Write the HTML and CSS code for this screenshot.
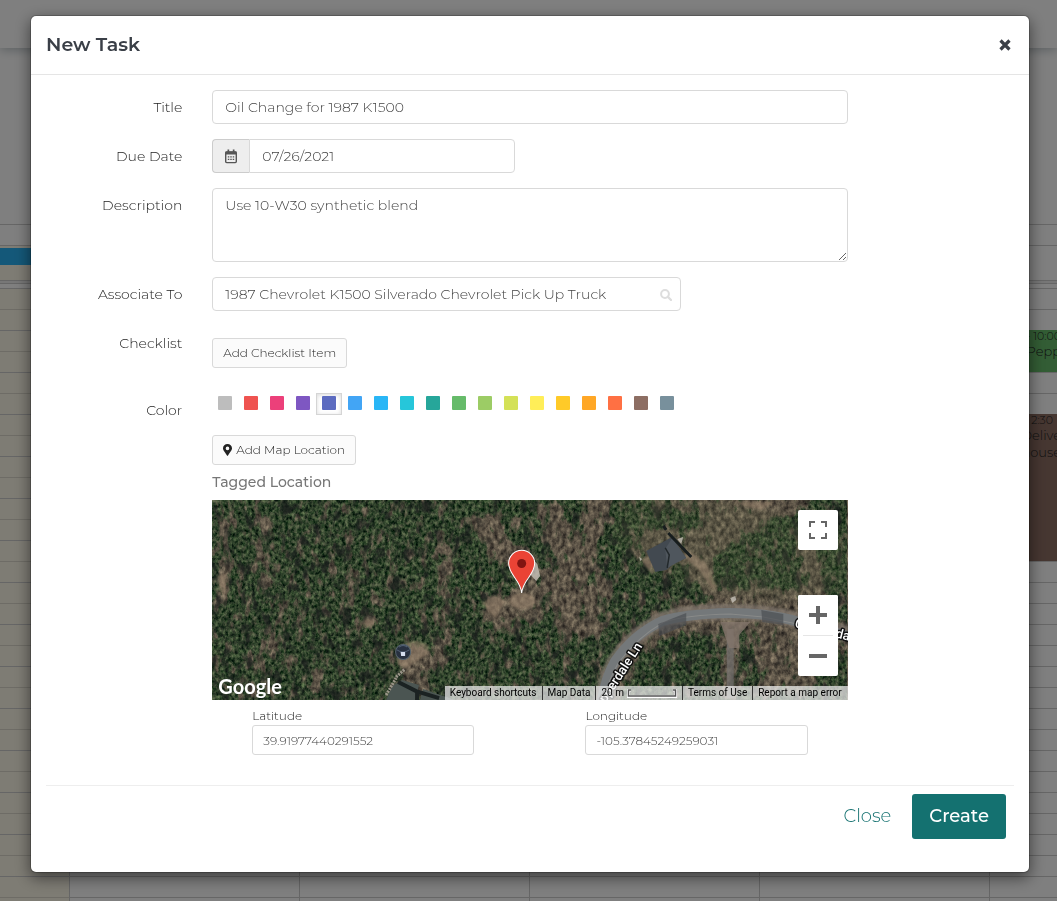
FILE: index.html
```html
<!DOCTYPE html>
<html lang="en">
<head>
<meta charset="utf-8">
<meta name="viewport" content="width=device-width, initial-scale=1">
<title>New Task</title>
<link rel="stylesheet" href="styles.css">
</head>
<body>
<div class="calendar" aria-hidden="true">
  <div class="topbar"></div>
  <div class="toolbar"></div>
  <div class="day-names"></div>
  <div class="all-day"><div class="all-day-side"><div class="all-day-event"></div></div></div>
  <div class="divider"></div>
  <div class="slots">
    <div class="day today"></div>
    <div class="day"></div>
    <div class="day"></div>
    <div class="day"></div>
    <div class="day"></div>
    <div class="day">
      <div class="event green"><div class="event-time">9:00 - 10:00</div><div>Call Pepp</div></div>
      <div class="event brown"><div class="event-time">12:30 - 2:30</div><div>1st Delive</div><div>to house</div></div>
    </div>
  </div>
</div>

<div class="backdrop">
<div class="modal" role="dialog" aria-labelledby="dialog-title">
  <header class="modal-header">
    <h1 class="modal-title" id="dialog-title">New Task</h1>
    <button class="dismiss" type="button" aria-label="Dismiss"><svg width="14" height="14" viewBox="0 0 14 14"><path d="M2.500 2.500L11.500 11.500M11.500 2.500L2.500 11.500" stroke="#3a3f47" stroke-width="3.200"/></svg></button>
  </header>
  <form class="modal-body">
    <div class="row">
      <label class="label" for="title">Title</label>
      <div class="field wide"><input class="control" id="title" type="text" value="Oil Change for 1987 K1500"></div>
    </div>
    <div class="row">
      <label class="label" for="due">Due Date</label>
      <div class="field narrow">
        <div class="group">
          <span class="addon"><svg width="14" height="15" viewBox="0 0 14 15"><rect x="1.700" y="3" width="10.600" height="10.600" rx="1" fill="none" stroke="#555" stroke-width="1.400"/><path d="M1.500 2.500h11v3h-11zM3.500 .5h1.700v3H3.500zM8.800 .5h1.700v3H8.800z" fill="#555"/><path d="M3.800 7.300h1.500v1.300H3.800zM6.250 7.300h1.500v1.300h-1.500zM8.700 7.300h1.500v1.300H8.700zM3.800 9.800h1.500v1.300H3.800zM6.250 9.800h1.500v1.300h-1.500zM8.700 9.800h1.500v1.300H8.700z" fill="#555"/></svg></span>
          <input class="control" id="due" type="text" value="07/26/2021">
        </div>
      </div>
    </div>
    <div class="row">
      <label class="label" for="description">Description</label>
      <div class="field wide"><textarea class="control area" id="description">Use 10-W30 synthetic blend</textarea></div>
    </div>
    <div class="row">
      <label class="label" for="associate">Associate To</label>
      <div class="field medium">
        <div class="search">
          <input class="control" id="associate" type="text" value="1987 Chevrolet K1500 Silverado Chevrolet Pick Up Truck">
          <svg class="search-icon" width="12" height="12" viewBox="0 0 12 12"><circle cx="5" cy="5" r="3.900" fill="none" stroke="#ddd" stroke-width="2"/><path d="M7.800 7.800L11 11" stroke="#ddd" stroke-width="2.300" stroke-linecap="round"/></svg>
        </div>
      </div>
    </div>
    <div class="row checklist-row">
      <span class="label">Checklist</span>
      <div class="field wide checklist"><button class="small-button" type="button">Add Checklist Item</button></div>
    </div>
    <div class="row">
      <span class="label">Color</span>
      <div class="field wide swatches" role="group" aria-label="Color">
        <button type="button" class="swatch gray" aria-label="Gray"></button>
        <button type="button" class="swatch red" aria-label="Red"></button>
        <button type="button" class="swatch pink" aria-label="Pink"></button>
        <button type="button" class="swatch purple" aria-label="Purple"></button>
        <button type="button" class="swatch indigo selected" aria-label="Indigo" aria-pressed="true"></button>
        <button type="button" class="swatch blue" aria-label="Blue"></button>
        <button type="button" class="swatch sky" aria-label="Light blue"></button>
        <button type="button" class="swatch cyan" aria-label="Cyan"></button>
        <button type="button" class="swatch teal" aria-label="Teal"></button>
        <button type="button" class="swatch leaf" aria-label="Green"></button>
        <button type="button" class="swatch light-green" aria-label="Light green"></button>
        <button type="button" class="swatch lime" aria-label="Lime"></button>
        <button type="button" class="swatch yellow" aria-label="Yellow"></button>
        <button type="button" class="swatch amber" aria-label="Amber"></button>
        <button type="button" class="swatch orange" aria-label="Orange"></button>
        <button type="button" class="swatch deep-orange" aria-label="Deep orange"></button>
        <button type="button" class="swatch earth" aria-label="Brown"></button>
        <button type="button" class="swatch slate" aria-label="Blue gray"></button>
      </div>
    </div>
    <div class="row">
      <div class="field wide offset">
        <button class="small-button" type="button"><svg width="9" height="12" viewBox="0 0 9 12"><path fill-rule="evenodd" d="M4.500 0C2 0 0 1.900 0 4.300 0 6.300 1.300 7.200 4 11.600a.6.6 0 0 0 1 0C7.700 7.200 9 6.300 9 4.300 9 1.900 7 0 4.500 0zm0 2.600a1.800 1.800 0 1 1 0 3.600 1.800 1.800 0 0 1 0-3.600z" fill="#222"/></svg>Add Map Location</button>
        <h2 class="map-title">Tagged Location</h2>
        <div class="map">
          <svg class="terrain" viewBox="0 0 635 200" preserveAspectRatio="xMidYMid slice">
            <defs>
              <filter id="soil" x="0" y="0" width="100%" height="100%" color-interpolation-filters="sRGB">
                <feTurbulence type="fractalNoise" baseFrequency=".22 .16" numOctaves="4" seed="8"/>
                <feColorMatrix values=".6 0 0 0 .06  .55 0 0 0 .05  .45 0 0 0 .05  0 0 0 0 1"/>
              </filter>
              <filter id="trees" x="0" y="0" width="100%" height="100%" color-interpolation-filters="sRGB">
                <feTurbulence type="fractalNoise" baseFrequency=".12 .065" numOctaves="5" seed="21" result="n"/>
                <feColorMatrix in="n" values="0 0 0 0 0 0 0 0 0 0 0 0 0 0 0 1 0 0 0 0" result="a"/>
                <feComposite in="SourceAlpha" in2="a" operator="arithmetic" k2=".48" k3="1" k4="-.35" result="d"/>
                <feComponentTransfer in="d" result="mask"><feFuncA type="linear" slope="5" intercept="-1.900"/></feComponentTransfer>
                <feTurbulence type="fractalNoise" baseFrequency=".3 .24" numOctaves="4" seed="5"/>
                <feColorMatrix values=".62 0 0 0 -.12  .58 .1 0 0 -.08  .46 0 0 0 -.06  0 0 0 0 1"/>
                <feComposite in2="mask" operator="in"/>
              </filter>
              <filter id="shade" x="0" y="0" width="100%" height="100%" color-interpolation-filters="sRGB">
                <feTurbulence type="fractalNoise" baseFrequency=".1 .065" numOctaves="4" seed="47"/>
                <feColorMatrix values="0 0 0 0 .1  0 0 0 0 .115  0 0 0 0 .11  5 0 0 0 -2.700" result="s"/>
                <feComposite in="s" in2="SourceAlpha" operator="in"/>
              </filter>
              <filter id="soft"><feGaussianBlur stdDeviation="5"/></filter>
              <filter id="edge"><feGaussianBlur stdDeviation="1"/></filter>
              <mask id="open">
                <rect width="635" height="200" fill="#fff"/>
                <g fill="#000" stroke="#000" stroke-linecap="round" filter="url(#soft)">
                  <path d="M275 25L300 55M325 75L315 110L285 108M340 15L365 80L388 0M390 90L360 125L340 80M350 95L380 125" fill="none" stroke-width="24" stroke-opacity=".8"/>
                  <path d="M12 20V100M52 20V85M78 105L55 150L38 190M232 40V115L224 165M140 75L137 105M105 170V200M285 110V135" fill="none" stroke-width="9" stroke-opacity=".75"/>
                  <path d="M180 200L198 150L215 150V190zM440 0H490V32H430V60H480V80L505 92H600V120L495 102L500 50L600 0zM545 132H600V190H550zM388 200L410 145L470 105H560L635 125V145L540 130H455L415 160L405 200z" stroke-width="4" fill-opacity=".75"/>
                  <ellipse cx="157" cy="123" rx="7" ry="6"/><ellipse cx="309" cy="102" rx="17" ry="12"/>
                  <path d="M518 120V190M595 40L605 90" stroke-width="14"/>
                </g>
              </mask>
            </defs>
            <rect width="635" height="200" filter="url(#soil)"/>
            <g filter="url(#trees)"><g mask="url(#open)"><rect width="635" height="200"/></g></g>
            <g filter="url(#shade)" opacity=".75"><g mask="url(#open)"><rect width="635" height="200"/></g></g>
            <path d="M410 0H510L635 30V90L560 100L480 90L400 40z" fill="#5d6544" opacity=".2" filter="url(#soft)"/>
            <g fill="#9b866f" filter="url(#edge)" opacity=".6">
              <ellipse cx="310" cy="101" rx="13" ry="8"/><ellipse cx="157" cy="123" rx="6" ry="4"/>
              <path d="M270 103l12-8 12 6-6 8-4 10-6-6zM5 76l9-3v22l-7-4zM520 2h42l-14 8-15-4zM188 148q14-13 28-2v8l-22 14-9-4zM435 57l10 14-6 3-11-16zM475 50l18 12 12 25-5 2-14-20-15-12z"/>
            </g>
            <path d="M388 210Q392 180 403 161Q422 134 450 120Q472 112 518 112Q560 112 590 122L635 134" fill="none" stroke="#81776d" stroke-width="16" opacity=".75" filter="url(#edge)"/>
            <path d="M388 210Q392 180 403 161Q422 134 450 121Q472 114 518 113Q560 113 590 123L635 136" fill="none" stroke="#74787a" stroke-width="10"/>
            <path d="M392 200Q396 180 406 163Q425 137 452 122Q474 115 518 114L551 117L590 125L635 138" fill="none" stroke="#92928f" stroke-width="1" opacity=".7"/>
            <path d="M446 124l28-11v12l-27 11zM549 110l22 4v11l-21-3z" fill="#484c50" opacity=".65"/>
            <path d="M518 129V198" stroke="#73706d" stroke-width="7" opacity=".75"/>
            <path d="M508 122h30l-11 13v13h-10z" fill="#83766b" opacity=".8"/>
            <path d="M434 51L460 37L474 58L463 62L454 70L443 72z" fill="#424950"/>
            <path d="M453 49L460 38L474 58L464 63L455 68z" fill="#4f565d"/>
            <path d="M453 48l4 7-2 13" fill="none" stroke="#22282b" stroke-width="1.500"/>
            <path d="M454 30l-3-4M456 33L479 57" stroke="#171d1e" stroke-width="3"/>
            <path d="M465 39l6-2-2 7zM427 57l3 2-2 2zM518 98l5-2 1 4-4 3zM310 60l8-4 7 8 3 12-4 5-7-8z" fill="#c6c1b8" opacity=".8"/>
            <path d="M180 186l10-6 17 5-4 15h-29zM211 189l32 11h-35z" fill="#4b5552"/>
            <path d="M186 182l18 9 23 7M205 190v10" fill="none" stroke="#1b2222" stroke-width="4"/>
            <path d="M184 177l9-8M174 195l10-17" stroke="#9b9589" stroke-width="3" stroke-dasharray="2 1"/>
            <circle cx="191" cy="152" r="7.500" fill="#283140" stroke="#56636d"/>
            <path d="M185 150q6 4 12 0M187 147q4-3 8 0" stroke="#66778e" fill="none" stroke-width=".7"/><path d="M188.500 152h4.500v4h-4z" fill="#d7e0f0"/>
            <g class="road-label"><text transform="translate(427 144) rotate(-57)" text-anchor="end" x="0" y="4">Copperdale Ln</text><text transform="translate(582 127) rotate(14)">Copperdale</text></g>
            <path d="M309.500 93C308.500 80 296.500 75 296.500 63.300A13 13 0 0 1 322.500 63.300C322.500 75 310.500 80 309.500 93z" fill="#ea4335" stroke="#fff"/>
            <circle cx="309.500" cy="63.500" r="4.500" fill="#811411"/>
          </svg>
          <a class="logo" href="#google">Google</a>
          <div class="map-controls">
            <button class="map-button" type="button" aria-label="Toggle fullscreen"><svg width="18" height="18" viewBox="0 0 18 18"><path d="M1 6V1h5M12 1h5v5M17 12v5h-5M6 17H1v-5" fill="none" stroke="#666" stroke-width="2"/></svg></button>
            <div class="zoom-controls">
              <button class="map-button" type="button" aria-label="Zoom in"><svg width="18" height="18" viewBox="0 0 18 18"><path d="M9 0v18M0 9h18" stroke="#666" stroke-width="4"/></svg></button>
              <button class="map-button" type="button" aria-label="Zoom out"><svg width="18" height="18" viewBox="0 0 18 18"><path d="M0 9h18" stroke="#666" stroke-width="4"/></svg></button>
            </div>
          </div>
          <div class="map-legal">
            <button type="button">Keyboard shortcuts</button><button type="button">Map Data</button><button type="button">20 m<svg width="50" height="9" viewBox="0 0 50 9"><path d="M4 1H1.500V7.500H48.500V1H46" fill="none" stroke="#fff" stroke-width="3"/><path d="M4 1H1.500V7H48.500V1H46" fill="none" stroke="#555" stroke-width="1.500"/></svg></button><a href="#terms">Terms of Use</a><a href="#report">Report a map error</a>
          </div>
        </div>
        <div class="coordinates">
          <div><label for="lat">Latitude</label><input class="control compact" id="lat" type="text" value="39.91977440291552"></div>
          <div><label for="lng">Longitude</label><input class="control compact" id="lng" type="text" value="-105.37845249259031"></div>
        </div>
      </div>
    </div>
    <footer class="modal-footer">
      <button class="close" type="button">Close</button>
      <button class="create" type="submit">Create</button>
    </footer>
  </form>
</div>
</div>
</body>
</html>
```

FILE: styles.css
```css
*, *::before, *::after { box-sizing: border-box; }
html, body { height: 100%; }
body {
  margin: 0;
  overflow: hidden;
  background: #fff;
  color: #222;
  font-family: Montserrat, Inter, sans-serif;
  font-size: 14px;
  font-weight: 350;
  line-height: 20px;
}
button, input, textarea { font: inherit; color: inherit; }
button { cursor: pointer; }
svg { display: block; }

/* Calendar under the dialog */
.calendar { display: flex; flex-direction: column; height: 100vh; overflow: hidden; }
.topbar { flex: none; height: 48px; box-shadow: 0 2px 10px #b8c0c4; }
.toolbar { flex: none; height: 176px; }
.day-names { flex: none; height: 22px; border: 1px solid #ccc; border-width: 1px 0; }
.all-day { flex: none; height: 34px; }
.all-day-side { width: 69px; height: 34px; padding-top: 2px; background: #fcf8e9; }
.all-day-event { height: 17px; background: #29b1f2; }
.divider { flex: none; height: 4px; border: 1px solid #ccc; border-width: 1px 0; background: #eee; }
.slots { flex: 1; display: grid; grid-template-columns: 70px repeat(5, 230px); padding-top: 4px; }
.day {
  border-right: 1px solid #ccc;
  background-image: repeating-linear-gradient(#ccc 0 1px, transparent 1px 42px), repeating-linear-gradient(transparent 0 21px, #ccc 21px 22px, transparent 22px 42px), linear-gradient(90deg, transparent 50%, #fff 50%);
  background-size: auto, auto, 2px 100%;
  background-blend-mode: normal;
}
.today { background-color: #fcf8e9; background-image: repeating-linear-gradient(#ccc 0 1px, transparent 1px 42px), repeating-linear-gradient(transparent 0 21px, #ddd9cc 21px 22px, transparent 22px 42px); background-size: auto; }
.event { padding-right: 158px; color: #222; font-size: 13px; line-height: 17px; text-align: right; }
.event-time { font-size: 11px; line-height: 13px; }
.green { height: 42px; margin-top: 42px; background: #66bb6a; }
.brown { height: 147px; margin-top: 42px; background: #8d6e63; }
.brown .event-time { padding-right: 8px; }

/* Dialog */
.backdrop { position: fixed; inset: 0; overflow: auto; padding: 15px 27px 28px 30px; background: rgba(0, 0, 0, .5); }
.modal { border: 1px solid rgba(0, 0, 0, .2); border-radius: 6px; background: #fff; background-clip: padding-box; box-shadow: 0 5px 15px rgba(0, 0, 0, .5); }
.modal-header { display: flex; align-items: center; justify-content: space-between; height: 59px; padding: 0 17px 0 15px; border-bottom: 1px solid #e5e5e5; }
.modal-title { margin: 0; font-size: 19px; line-height: 24px; font-weight: 600; color: #3a3f47; }
.dismiss { padding: 0; border: 0; background: none; }
.modal-body { padding: 15px 0 33px; }
.row { display: grid; grid-template-columns: repeat(12, 1fr); margin-bottom: 15px; }
.label { grid-column: span 2; padding: 7px 15px 0; text-align: right; white-space: nowrap; }
.field { padding: 0 15px; min-width: 0; }
.wide { grid-column: span 8; }
.medium { grid-column: span 6; }
.narrow { grid-column: span 4; }
.offset { grid-column: 3 / span 8; }
.control { display: block; width: 100%; height: 34px; padding: 6px 12px; border: 1px solid #d9d9d9; border-radius: 4px; background: #fff; color: #444; line-height: 20px; outline: 0; }
.area { height: 74px; resize: vertical; }
.group { display: flex; }
.group .control { flex: 1; min-width: 0; border-radius: 0 4px 4px 0; }
.addon { display: grid; place-items: center; width: 37px; border: 1px solid #ccc; border-right: 0; border-radius: 4px 0 0 4px; background: #eee; }
.search { position: relative; }
.search-icon { position: absolute; right: 9px; top: 12px; }
.checklist-row { margin-bottom: 25px; }
.checklist { padding-top: 12px; }
.small-button { display: flex; align-items: center; gap: 4px; height: 30px; padding: 0 10px; border: 1px solid #d9d9d9; border-radius: 3px; background: #fbfbfb; font-size: 12px; line-height: 18px; white-space: nowrap; }
.swatches { display: flex; align-items: flex-start; }
.swatch { display: flex; align-items: flex-start; width: 26px; height: 22px; padding: 2px 5px; border: 1px solid transparent; background: none; }
.swatch::before { content: ""; width: 14px; height: 14px; border-radius: 1px; background: currentColor; }
.selected { border-color: #d5d5d5; box-shadow: inset 0 1px 4px rgba(0, 0, 0, .15); }
.gray { color: #bdbdbd; } .red { color: #ef5350; } .pink { color: #ec407a; }
.purple { color: #7e57c2; } .indigo { color: #5c6bc0; } .blue { color: #42a5f5; }
.sky { color: #29b6f6; } .cyan { color: #26c6da; } .teal { color: #26a69a; }
.leaf { color: #66bb6a; } .light-green { color: #9ccc65; } .lime { color: #d4e157; }
.yellow { color: #ffee58; } .amber { color: #ffca28; } .orange { color: #ffa726; }
.deep-orange { color: #ff7043; } .earth { color: #8d6e63; } .slate { color: #78909c; }
.map-title { margin: 7px 0 8px; font-size: 14px; line-height: 20px; font-weight: 500; color: #777; }

/* Map */
.map { position: relative; height: 200px; overflow: hidden; background: #3d3e31; font-family: Roboto, sans-serif; }
.terrain { width: 100%; height: 100%; }
.road-label { font-size: 13px; font-weight: 500; fill: #fff; stroke: #111; stroke-width: 3px; stroke-linejoin: round; paint-order: stroke; }
.logo { position: absolute; left: 6px; bottom: 2px; color: #fff; font-family: Lato, sans-serif; font-size: 20px; line-height: 24px; font-weight: 700; text-decoration: none; }
.map-controls { position: absolute; top: 10px; right: 10px; display: flex; flex-direction: column; gap: 45px; }
.map-button { display: grid; place-items: center; width: 40px; height: 40px; padding: 0; border: 0; border-radius: 2px; background: #fff; }
.zoom-controls { border-radius: 2px; background: #fff; }
.zoom-controls .map-button + .map-button { height: 41px; background: linear-gradient(#e6e6e6, #e6e6e6) center top / 30px 1px no-repeat; }
.map-legal { position: absolute; right: 0; bottom: 0; display: flex; height: 14px; background: rgba(245, 245, 245, .7); color: #000; font-size: 10px; line-height: 14px; font-weight: 400; white-space: nowrap; }
.map-legal > * { display: flex; align-items: center; gap: 3px; padding: 0 5px; border: 0; background: none; color: inherit; text-decoration: none; }
.map-legal > * + * { border-left: 1px solid #333; }
.map-legal > :last-child { padding-right: 6px; }
.coordinates { display: grid; grid-template-columns: 1fr 1fr; gap: 111px; padding: 7px 40px 0; font-size: 12px; line-height: 18px; }
.coordinates label { display: block; }
.compact { height: 30px; padding: 5px 10px; border-radius: 3px; line-height: 18px; }

.modal-footer { display: flex; justify-content: flex-end; gap: 21px; margin: 30px 15px 0; padding: 8px 8px 0; border-top: 1px solid #eee; font-size: 18px; line-height: 25px; }
.close { padding: 0; border: 0; background: none; color: #147170; }
.create { height: 45px; padding: 0 17px; border: 0; border-radius: 3px; background: #147170; color: #fff; font-weight: 500; }
```
